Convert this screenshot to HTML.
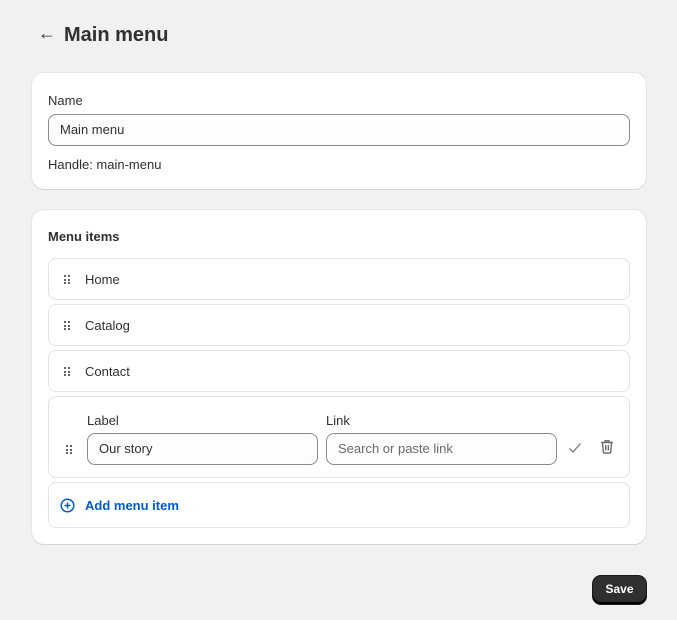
<!DOCTYPE html>
<html><head><style>
*{box-sizing:border-box;margin:0;padding:0}
body{width:677px;height:620px;background:#f1f1f1;font-family:"Liberation Sans",sans-serif;color:#303030;font-size:13px;position:relative;overflow:hidden}
.abs{position:absolute}
.card{position:absolute;left:32px;width:614px;background:#fff;border-radius:12px;box-shadow:0 1px 0 #d4d4d4,0 0 0 1px #e6e6e6}
.inp{position:absolute;border:1px solid #8a8a8a;border-radius:8px;background:#fdfdfd;height:32px;line-height:30px;padding-left:11px;font-size:13px}
.row{position:absolute;left:16px;width:582px;border:1px solid #e3e3e3;border-radius:8px;background:#fff}
.grip{position:absolute;left:15px;width:6px;height:9px}
.grip i{position:absolute;width:2px;height:2px;background:#616161}
</style></head><body>
<div class="abs" style="left:38px;top:23px;font-size:18px">←</div>
<div class="abs" style="left:64px;top:24px;font-size:20px;font-weight:bold;color:#303030">Main menu</div>

<div class="card" style="top:73px;height:116px">
 <div class="abs" style="left:16px;top:20px">Name</div>
 <div class="inp" style="left:16px;top:41px;width:582px">Main menu</div>
 <div class="abs" style="left:16px;top:84px">Handle: main-menu</div>
</div>

<div class="card" style="top:210px;height:334px">
 <div class="abs" style="left:16px;top:19px;font-weight:bold">Menu items</div>
 <div class="row" style="top:48px;height:42px"><div class="grip" style="top:16px"><i style="left:0;top:0"></i><i style="left:4px;top:0"></i><i style="left:0;top:3.5px"></i><i style="left:4px;top:3.5px"></i><i style="left:0;top:7px"></i><i style="left:4px;top:7px"></i></div><div class="abs" style="left:36px;top:13px">Home</div></div>
 <div class="row" style="top:94px;height:42px"><div class="grip" style="top:16px"><i style="left:0;top:0"></i><i style="left:4px;top:0"></i><i style="left:0;top:3.5px"></i><i style="left:4px;top:3.5px"></i><i style="left:0;top:7px"></i><i style="left:4px;top:7px"></i></div><div class="abs" style="left:36px;top:13px">Catalog</div></div>
 <div class="row" style="top:140px;height:42px"><div class="grip" style="top:16px"><i style="left:0;top:0"></i><i style="left:4px;top:0"></i><i style="left:0;top:3.5px"></i><i style="left:4px;top:3.5px"></i><i style="left:0;top:7px"></i><i style="left:4px;top:7px"></i></div><div class="abs" style="left:36px;top:13px">Contact</div></div>
 <div class="row" style="top:186px;height:82px">
  <div class="grip" style="top:48px;left:17px"><i style="left:0;top:0"></i><i style="left:4px;top:0"></i><i style="left:0;top:3.5px"></i><i style="left:4px;top:3.5px"></i><i style="left:0;top:7px"></i><i style="left:4px;top:7px"></i></div>
  <div class="abs" style="left:38px;top:16px">Label</div>
  <div class="abs" style="left:277px;top:16px">Link</div>
  <div class="inp" style="left:38px;top:36px;width:231px">Our story</div>
  <div class="inp" style="left:277px;top:36px;width:231px;color:#6b6b6b">Search or paste link</div>
  <svg class="abs" style="left:519px;top:45px" width="14" height="12" viewBox="0 0 14 12"><path d="M1.5 6.5l3.5 3.5 7.5-8.5" fill="none" stroke="#8a8a8a" stroke-width="1.5"/></svg>
  <svg class="abs" style="left:551px;top:42px" width="14" height="15" viewBox="0 0 14 15"><path d="M1 3.5h12M5 3.5V1.8h4v1.7M2.5 3.5l.8 9.5c0 .6.4 1 1 1h5.4c.6 0 1-.4 1-1l.8-9.5M5.7 6v5.5M8.3 6v5.5" fill="none" stroke="#6b6b6b" stroke-width="1.4"/></svg>
 </div>
 <div class="row" style="top:272px;height:46px">
  <svg class="abs" style="left:11px;top:15px" width="15" height="15" viewBox="0 0 15 15"><circle cx="7.5" cy="7.5" r="6.3" fill="none" stroke="#005bd3" stroke-width="1.5"/><path d="M7.5 4.5v6M4.5 7.5h6" stroke="#005bd3" stroke-width="1.5"/></svg>
  <div class="abs" style="left:36px;top:15px;color:#005bd3;font-weight:bold">Add menu item</div>
 </div>
</div>

<div class="abs" style="left:593px;top:576px;width:53px;height:28px;background:#303030;border-radius:8px;box-shadow:inset 0 -2px 0 #000,0 0 0 1px #1a1a1a;color:#fff;font-weight:bold;font-size:12px;text-align:center;line-height:27px">Save</div>
</body></html>
